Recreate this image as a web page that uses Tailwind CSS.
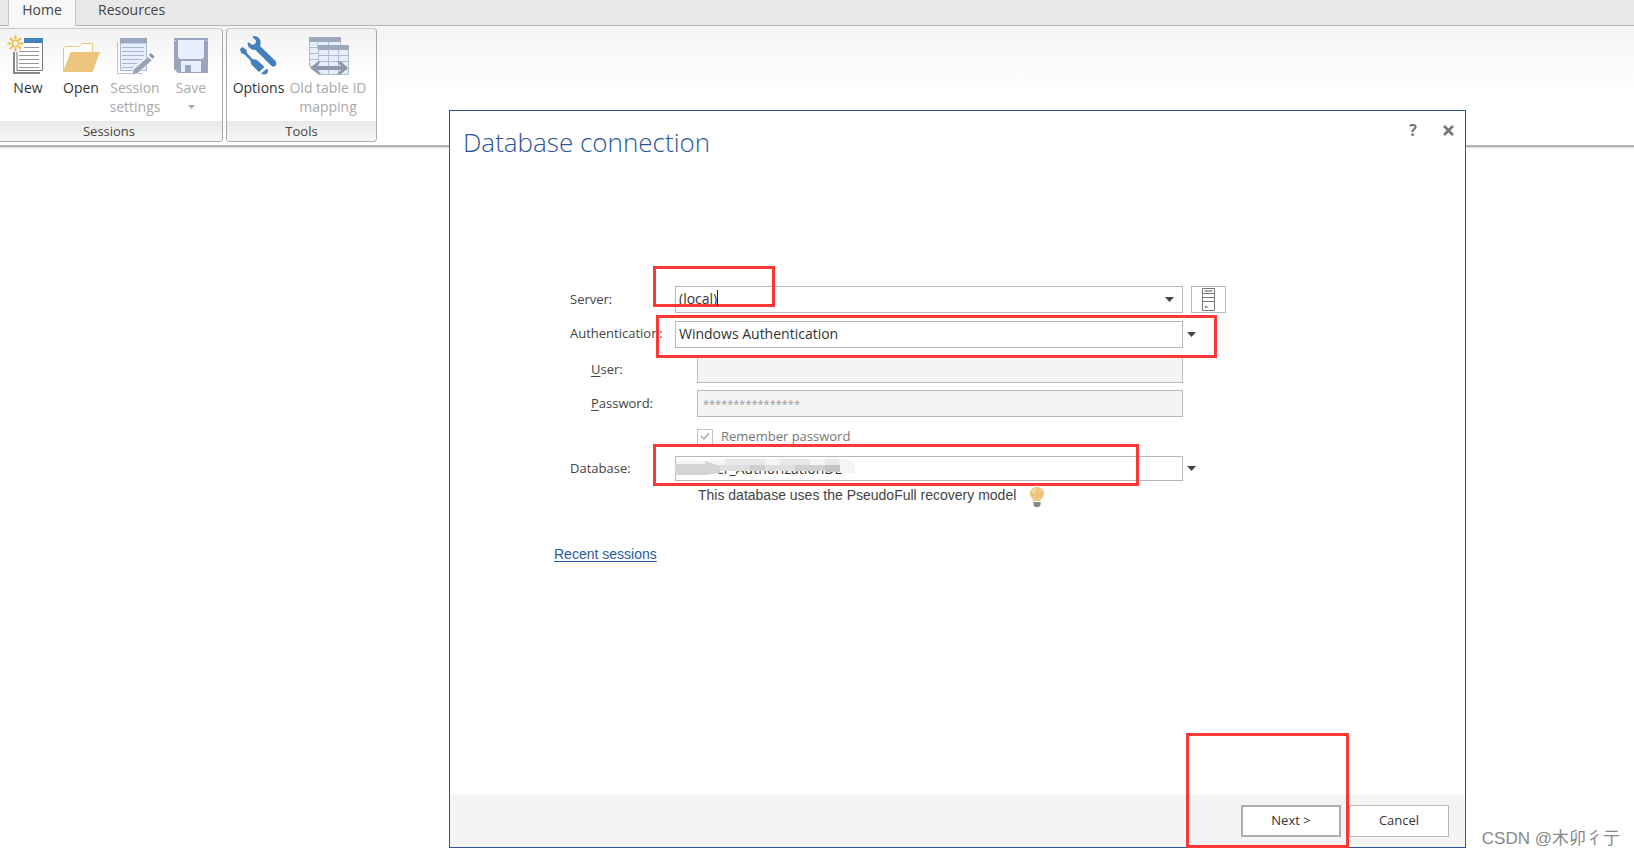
<!DOCTYPE html>
<html lang="en">
<head>
<meta charset="utf-8">
<title>Database connection</title>
<script src="https://cdn.jsdelivr.net/npm/@tailwindcss/browser@4"></script>
</head>
<body class="relative h-screen min-h-[640px] overflow-hidden bg-white font-['Open_Sans','Noto_Sans',sans-serif] text-[13px] text-[#444]">

<nav class="flex h-[26px] border-b border-[#b4b4b4] bg-[#e8e8e8]" aria-label="Ribbon tabs">
  <button class="ml-2 h-[26px] w-[68px] border-x border-[#c8c8c8] bg-[#f8f8f8] pb-[6px] text-[14px] leading-5">Home</button>
  <button class="h-5 px-[22px] text-[14px] leading-5">Resources</button>
</nav>

<header class="flex h-[121px] gap-[3px] border-b-2 border-[#b4b4b4] bg-linear-to-b from-[#f4f4f4] to-white to-60% pt-[2px] shadow-[0_1px_1px_#ddd]">
  <section class="flex h-[114px] w-[223px] flex-col overflow-hidden rounded-r border border-l-0 border-[#aaa] border-t-[#ccc] bg-linear-to-b from-[#f2f2f2] to-white to-40%">
    <div class="flex h-[93px] pt-[6px] leading-[19px]">
      <button class="flex w-[56px] flex-col items-center whitespace-nowrap text-[14px] text-[#333]">
        <svg class="mb-[3px] h-[40px] w-[44px] shrink-0" viewBox="6 35 44 40" fill="none" aria-hidden="true">
          <path d="M14 52V73H40" stroke="#888" stroke-width="2"/>
          <path d="M17 46L24 43H42V70H17Z" fill="#fff"/><path d="M17 52V70.500H42.500V43" stroke="#777"/>
          <path d="M24 38H43V43H24Z" fill="#4480bd"/>
          <path d="M24 47.500H39M19 51.500H39M19 55.500H39M19 59.500H39M19 63.500H39M19 67.500H39" stroke="#999"/>
          <circle cx="15.500" cy="43.500" r="3.200" fill="#fff" stroke="#edb74d" stroke-width="1.500"/>
          <path d="M15.500 35.500V39M15.500 48V51.500M7.500 43.500H11M20 43.500H23.500M10 38L12.400 40.400M18.600 46.600L21 49M10 49L12.400 46.600M18.600 40.400L21 38" stroke="#edb74d" stroke-width="2"/>
        </svg>New
      </button>
      <button class="flex w-[50px] flex-col items-center whitespace-nowrap text-[14px] text-[#333]">
        <svg class="mb-[3px] h-[40px] w-[40px] shrink-0" viewBox="61 35 40 40" fill="none" aria-hidden="true">
          <path d="M63.500 71V48.500L65.500 46.500H79L82 43.500H92.500V52" fill="#fff" stroke="#edc67e"/>
          <path d="M70.500 52H100L92.500 72H63Z" fill="#edc57d"/>
        </svg>Open
      </button>
      <button class="flex w-[58px] flex-col items-center whitespace-nowrap text-[14px] text-[#aaa]" disabled>
        <svg class="mb-[3px] h-[40px] w-[40px] shrink-0" viewBox="116 35 40 40" fill="none" aria-hidden="true">
          <path d="M118.500 42V73.500H144" stroke="#bac4d6"/>
          <path d="M121.500 43V70.500H147.500V43Z" fill="#e5efff" stroke="#aeb9ce"/>
          <path d="M121 38H148V43H121Z" fill="#9aa7c0"/>
          <path d="M123 47.500H145M123 51.500H145M123 55.500H145M123 59.500H143M123 63.500H138M123 67.500H134" stroke="#aab6cc"/>
          <path d="M133 75L134.500 69.500L149 56.500L153 60.500L138.500 73.500Z" fill="#9ba4b5" stroke="#fff" stroke-width=".7"/><path d="M150 55L152 53L155.500 56.500L153.500 59Z" fill="#8994a9"/>
        </svg>Session<br>settings
      </button>
      <button class="flex w-[54px] flex-col items-center whitespace-nowrap text-[14px] text-[#aaa]" disabled>
        <svg class="mb-[3px] h-[40px] w-[40px] shrink-0" viewBox="171 35 40 40" fill="none" aria-hidden="true">
          <path d="M174 38H208V73H178L174 69Z" fill="#9aa5bd"/><path d="M178 40H204V57L202 59H180L178 57Z" fill="#e7f0ff"/><path d="M181 61H201V72H181Z" fill="#e7f0ff"/><path d="M185 65H191V72H185Z" fill="#9aa5bd"/>
          <path d="M175.500 40V41M206.500 40V41" stroke="#e7f0ff"/>
        </svg>Save
        <svg class="mt-[8px] h-1 w-[7px]" viewBox="0 0 7 4" aria-hidden="true"><path d="M0 0H7L3.500 4Z" fill="#aaa"/></svg>
      </button>
    </div>
    <h2 class="flex-1 bg-linear-to-b from-[#e9e9e9] to-[#f8f8f8] pr-1 text-center text-[13px] leading-5">Sessions</h2>
  </section>
  <section class="flex h-[114px] w-[151px] flex-col overflow-hidden rounded border border-[#aaa] border-t-[#ccc] bg-linear-to-b from-[#f2f2f2] to-white to-40%">
    <div class="flex h-[93px] pt-[6px] leading-[19px]">
      <button class="flex w-[63px] flex-col items-center whitespace-nowrap text-[14px] text-[#333]">
        <svg class="mb-[3px] h-[40px] w-[40px] shrink-0" viewBox="238 36 40 40" fill="none" aria-hidden="true">
          <path d="M251 37.500L254 37Q258.500 38 259.500 42Q260 44.500 259 47L274.500 62Q276.500 65.500 274 67Q272 68.500 270 66.500L254.500 51Q250.500 51 248 48.500Q246 46 247 43L251.500 46L254.500 44.500L255 41.500Z" fill="#4480bd"/>
          <path d="M239 50L241.500 48L245.500 51L246 54L251.500 60L256 61L263.500 68L258 73L250 65L249.500 61.500L243.500 55.500L240 54Z" fill="#4480bd"/><path d="M260 74.500L266 69.500Q268 72 266 74.500Q264 76.500 260 74.500Z" fill="#4480bd"/>
        </svg>Options
      </button>
      <button class="flex w-[76px] flex-col items-center whitespace-nowrap text-[14px] text-[#aaa]" disabled>
        <svg class="mb-[3px] h-[40px] w-[44px] shrink-0" viewBox="306 36 44 40" fill="none" aria-hidden="true">
          <path d="M309.500 42V67.500H340.500V42Z" fill="#e5eefc" stroke="#b2bccd"/><path d="M309 38H341V43H309Z" fill="#9da8ba"/>
          <path d="M310 48.500H318M310 54.500H318M310 60.500H318M317.500 43V50M328.500 43V46" stroke="#b2bccd"/>
          <path d="M318.500 50V75.500H348.500V50Z" fill="#e5eefc" stroke="#b2bccd"/><path d="M318 46H349V51H318Z" fill="#9da8ba"/>
          <path d="M319 56.500H348M319 62.500H348M319 70.500H348M328.500 51V75M338.500 51V75" stroke="#b2bccd"/>
          <path d="M310 69L318 62.500H321L317 67H341L337 62.500H341L348 69L341 75H337L341 71H317L321 75H318Z" fill="#8d98aa"/>
        </svg>Old table ID<br>mapping
      </button>
    </div>
    <h2 class="flex-1 bg-linear-to-b from-[#e9e9e9] to-[#f8f8f8] text-center text-[13px] leading-5">Tools</h2>
  </section>
</header>

<section role="dialog" aria-labelledby="title" class="absolute top-[110px] right-[168px] bottom-[9px] left-[449px] flex flex-col border border-[#2a5699] bg-white">
  <div class="flex h-[60px] items-start pt-[11px] pr-[6px] pl-[13px]">
    <h1 id="title" class="flex-1 text-[26px] leading-10 font-light text-[#2a5699]">Database connection</h1>
    <button class="h-4 w-[22px] text-[16px] leading-4 font-bold text-[#777]" aria-label="Help">?</button>
    <button class="ml-[13px] flex h-4 w-[22px] items-center justify-center" aria-label="Close"><svg class="size-[11px]" viewBox="0 0 11 11" aria-hidden="true"><path d="M1 1L10 10M10 1L1 10" stroke="#777" stroke-width="2.600"/></svg></button>
  </div>

  <form class="ml-[120px] flex w-[656px] flex-1 flex-col pt-[115px] text-[13px]">
    <div class="relative flex h-[27px] items-center">
      <label for="server" class="w-[105px]">Server:</label>
      <div class="flex h-full flex-1 items-center border border-[#b8b8bf]">
        <input id="server" value="(local)" class="h-full min-w-0 flex-1 pb-[2px] pl-[3px] text-[14px] text-[#333] outline-none">
        <button type="button" class="mr-2 flex h-full w-[9px] items-center" aria-label="Show servers"><svg class="h-[5px] w-[9px]" viewBox="0 0 9 5" aria-hidden="true"><path d="M0 0H9L4.500 5Z" fill="#444"/></svg></button>
      </div>
      <button type="button" class="ml-2 flex h-full w-[35px] items-center justify-center border border-[#b8b8b8]" aria-label="Browse servers">
        <svg class="h-[23px] w-[13px]" viewBox="0 0 13 23" fill="none" aria-hidden="true"><path d="M.5 .5H12.500V22.500H.5ZM.5 5.500H12.500M.5 9.500H12.500M.5 13.500H12.500" stroke="#777"/><path d="M2.500 3H10.500" stroke="#aaa" stroke-width="2"/><path d="M3 18H5.500V20H3Z" fill="#6a9"/></svg>
      </button>
      <i class="pointer-events-none absolute -top-5 left-[83px] h-[41px] w-[122px] border-3 border-[#fc3737]"></i>
      <i class="absolute top-1 left-[147px] h-4 w-px bg-[#222]"></i>
    </div>
    <div class="relative mt-2 flex h-[27px] items-center">
      <label for="auth" class="w-[105px] pb-[2px]">Authentication:</label>
      <select id="auth" class="h-full min-w-0 flex-1 appearance-none border border-[#b8b8b8] pb-[2px] pl-[3px] text-[14px] text-[#333]"><option>Windows Authentication</option></select>
      <svg class="mr-[30px] ml-1 h-[5px] w-[9px]" viewBox="0 0 9 5" aria-hidden="true"><path d="M0 0H9L4.500 5Z" fill="#444"/></svg>
      <i class="pointer-events-none absolute -top-[6px] left-[86px] z-10 h-[43px] w-[561px] border-3 border-[#fc3737]"></i>
    </div>
    <div class="mt-2 mr-[43px] flex h-[27px] items-center">
      <label for="user" class="ml-[21px] w-[106px]"><u class="underline-offset-2">U</u>ser:</label>
      <input id="user" disabled class="h-full min-w-0 flex-1 border border-[#b8b8bf] bg-[#f4f4f4]">
    </div>
    <div class="mt-[7px] mr-[43px] flex h-[27px] items-center">
      <label for="password" class="ml-[21px] w-[106px]"><u class="underline-offset-2">P</u>assword:</label>
      <input id="password" disabled value="****************" class="h-full min-w-0 flex-1 border border-[#b8b8bf] bg-[#f4f4f4] pl-[5px] text-[11px] text-[#999]">
    </div>
    <div class="mt-[11px] ml-[127px] flex h-[18px] items-center gap-2 text-[#777]">
      <span class="relative flex size-4">
        <input id="remember" type="checkbox" checked disabled class="size-4 appearance-none border border-[#c4c4c4]">
        <svg class="pointer-events-none absolute inset-0 size-4" viewBox="0 0 16 16" fill="none" aria-hidden="true"><path d="M4 7L7 10L12 4" stroke="#aaa" stroke-width="1.500"/></svg>
      </span>
      <label for="remember">Remember password</label>
    </div>
    <div class="relative mt-[10px] flex h-[25px] items-center">
      <label for="database" class="w-[105px]">Database:</label>
      <input id="database" value="er_AuthorizationDB" class="h-full min-w-0 flex-1 border border-[#b8b8b8] pl-[40px] text-[14px] text-[#333]">
      <svg class="mr-[30px] ml-1 h-[5px] w-[9px]" viewBox="0 0 9 5" aria-hidden="true"><path d="M0 0H9L4.500 5Z" fill="#444"/></svg>
      <svg class="pointer-events-none absolute top-[2px] left-[105px] h-[18px] w-[180px]" viewBox="0 0 180 18" aria-hidden="true">
        <path d="M1 3Q12 0 24 3L52 1H170Q179 2 180 8V15H166V13H45L30 17H1Z" fill="#f4f4f5"/><path d="M50 1H90V8H50ZM105 1H135V8H105ZM150 1H164V8H150Z" fill="#e8e8ea"/>
        <path d="M0 6H30V3L45 8V15L30 17H2L0 15Z" fill="#d4d4d4"/><path d="M45 7H165V13H45Z" fill="#dededf"/><path d="M75 7H90V13H75ZM120 7H150V13H120Z" fill="#d1cfd1"/><path d="M150 7H165V14H150Z" fill="#c5c5c8"/>
      </svg>
      <i class="pointer-events-none absolute -top-3 left-[83px] h-[42px] w-[486px] border-3 border-[#fc3737]"></i>
    </div>
    <div class="mt-[5px] ml-[128px] flex h-[22px] items-center font-['Liberation_Sans',sans-serif] text-[14px]">
      <p class="pb-1">This database uses the PseudoFull recovery model</p>
      <svg class="ml-[14px] h-5 w-[14px]" viewBox="0 0 14 20" aria-hidden="true"><path d="M7 0C3 0 0 3 0 6.500C0 10 3 11 3.500 14H10.500C11 11 14 10 14 6.500C14 3 11 0 7 0Z" fill="#edc57d"/><path d="M3 6Q3 3 6 2" stroke="#fff" fill="none"/><path d="M3.500 15H10.500V18L9 20H5L3.500 18Z" fill="#888"/></svg>
    </div>
    <a href="#" class="mt-9 -ml-4 self-start font-['Liberation_Sans',sans-serif] text-[14px] leading-5 text-[#2a5aa5] underline underline-offset-2">Recent sessions</a>
  </form>

  <footer class="flex h-[52px] items-start justify-end gap-2 bg-[#f4f4f4] pt-[10px] pr-4">
    <div class="relative">
      <button class="h-8 w-[100px] border-2 border-[#adadad] bg-white text-[#333]">Next &gt;</button>
      <i class="pointer-events-none absolute -top-[72px] -left-[55px] z-10 h-[115px] w-[163px] border-3 border-[#fc3737]"></i>
    </div>
    <button class="h-8 w-[100px] border border-[#b8b8b8] bg-white text-[#333]">Cancel</button>
  </footer>
</section>

<p class="absolute right-[14px] bottom-[6px] font-['Liberation_Sans','Noto_Sans_CJK_SC',sans-serif] text-[17px] leading-6 text-[#888]">CSDN @木卯彳亍</p>
</body>
</html>
